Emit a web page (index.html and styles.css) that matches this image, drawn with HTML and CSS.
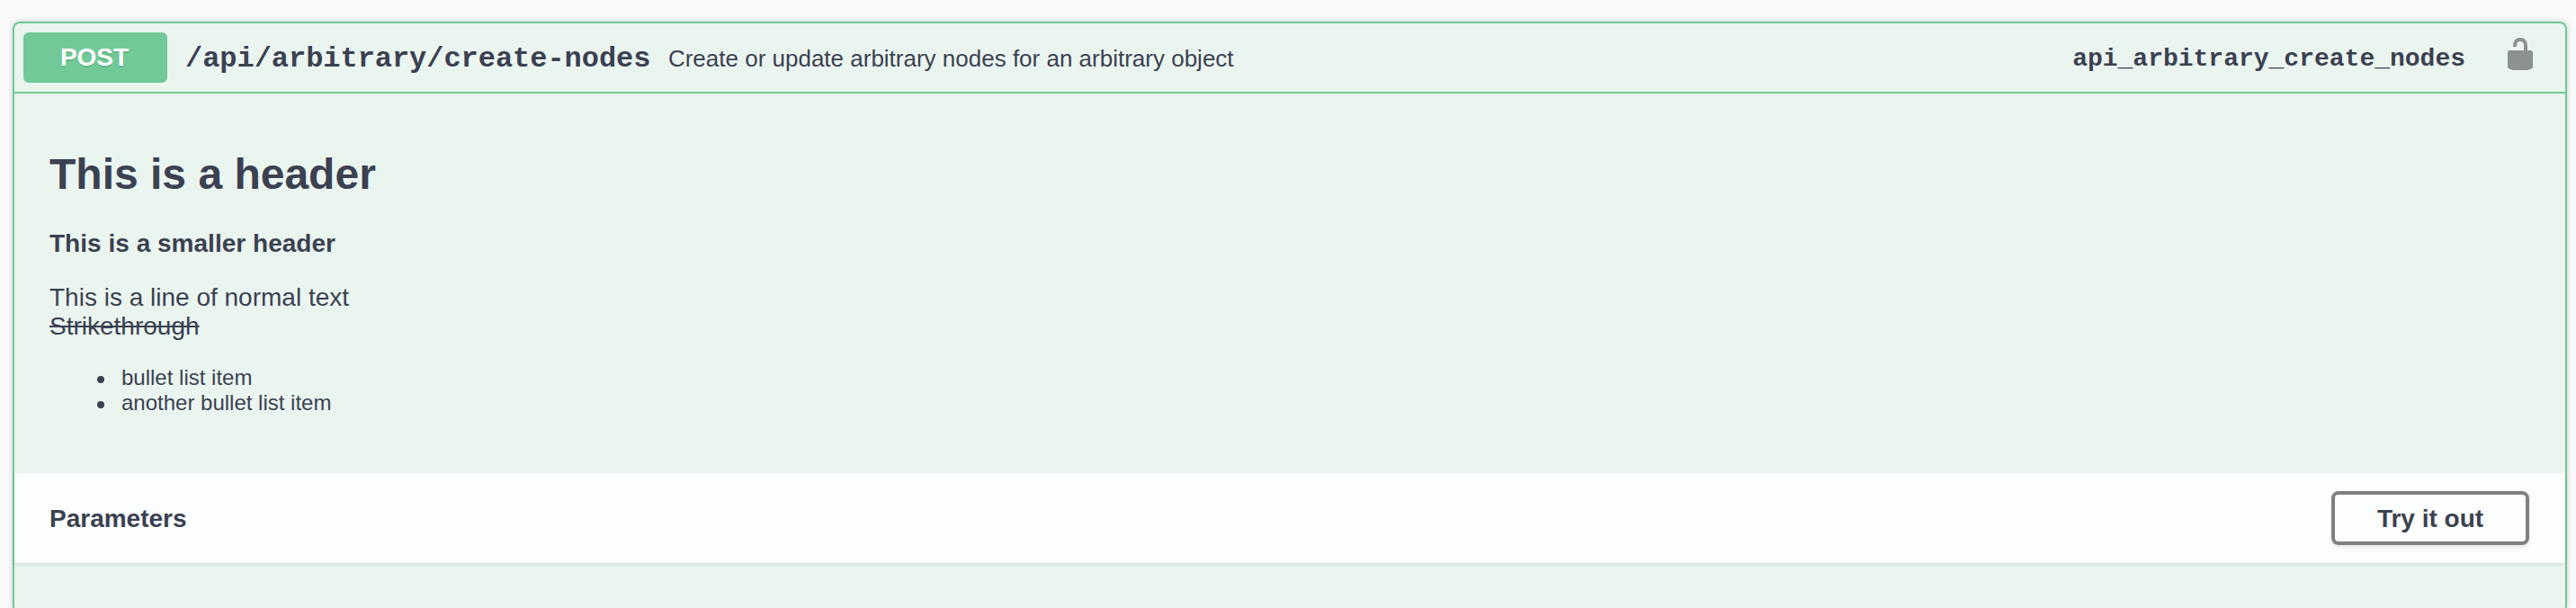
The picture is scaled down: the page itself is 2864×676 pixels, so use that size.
FILE: index.html
```html
<!DOCTYPE html>
<html lang="en">
<head>
<meta charset="utf-8">
<title>API documentation</title>
<link rel="stylesheet" href="styles.css">
</head>
<body>
<main class="opblock">
  <header class="summary">
    <span class="method">POST</span>
    <span class="path">/api/arbitrary/create-nodes</span>
    <span class="description">Create or update arbitrary nodes for an arbitrary object</span>
    <span class="operation-id">api_arbitrary_create_nodes</span>
    <svg class="lock" viewBox="0 0 20 20" aria-hidden="true"><path d="M15.8 8H14V5.6C14 2.703 12.665 1 10 1 7.334 1 6 2.703 6 5.6V6h2v-.801C8 3.754 8.797 3 10 3c1.203 0 2 .754 2 2.199V8H4c-.553 0-1 .646-1 1.199V17c0 .549.428 1.139.951 1.307l1.197.387C5.672 18.861 6.55 19 7.1 19h5.8c.549 0 1.428-.139 1.951-.307l1.196-.387c.524-.167.953-.757.953-1.306V9.199C17 8.646 16.352 8 15.8 8z"/></svg>
  </header>
  <section class="markdown">
    <h1>This is a header</h1>
    <h2>This is a smaller header</h2>
    <p>This is a line of normal text<br><del>Strikethrough</del></p>
    <ul>
      <li>bullet list item</li>
      <li>another bullet list item</li>
    </ul>
  </section>
  <section class="section-header">
    <h3>Parameters</h3>
    <button class="try-out" type="button">Try it out</button>
  </section>
</main>
</body>
</html>
```
FILE: styles.css
```css
* { box-sizing: border-box; }

body {
  margin: 0;
  height: 676px;
  padding: 24px 10px 0 14px;
  background: #fafafa;
  color: #3b4151;
  font-family: "Liberation Sans", Arial, sans-serif;
}

.opblock {
  height: 652px;
  border: 2px solid #70c996;
  border-bottom: 0;
  border-radius: 8px 8px 0 0;
  background: #ebf5f0;
  box-shadow: 0 0 6px rgba(0, 0, 0, .19);
}

.summary {
  display: flex;
  align-items: center;
  height: 78px;
  padding: 0 30px 0 10px;
  border-bottom: 2px solid #70c996;
}

.method {
  width: 160px;
  height: 56px;
  padding-right: 2px;
  border-radius: 6px;
  background: #70c996;
  color: #fff;
  font-size: 28px;
  font-weight: 700;
  line-height: 56px;
  text-align: center;
  text-shadow: 0 2px 0 rgba(0, 0, 0, .1);
}

.path,
.operation-id {
  padding-top: 2px;
  font-family: "Liberation Mono", "Courier New", monospace;
  font-weight: 700;
  white-space: nowrap;
}

.path {
  margin-left: 20px;
  font-size: 32px;
  letter-spacing: -.04px;
}

.description {
  flex: 1;
  margin-left: 19.5px;
  padding-top: 2px;
  font-size: 26px;
}

.operation-id { font-size: 28px; }

.lock {
  width: 40px;
  height: 40px;
  margin: 0 0 8px 41px;
  opacity: .4;
}

.markdown {
  height: 422px;
  padding: 62px 39px 0;
}

.markdown h1 {
  margin: 0 0 33px;
  font-size: 48px;
  line-height: 56px;
}

.markdown h2 {
  margin: 0 0 28px;
  font-size: 28px;
  line-height: 32px;
  letter-spacing: .02px;
}

.markdown p {
  margin: 0 0 27px;
  font-size: 28px;
  line-height: 32px;
}

.markdown ul {
  margin: 0;
  padding-left: 53px;
  font-size: 24px;
  line-height: 28px;
  list-style: none;
}

.markdown li {
  display: flex;
  align-items: center;
}

.markdown li::before {
  content: "";
  width: 8px;
  height: 8px;
  margin: 4px 19px 0 0;
  border-radius: 50%;
  background: #3b4151;
}

.section-header {
  display: flex;
  align-items: center;
  justify-content: space-between;
  height: 100px;
  padding: 0 40px 0 39px;
  background: rgba(255, 255, 255, .85);
  box-shadow: 0 2px 4px rgba(0, 0, 0, .1);
}

.section-header h3 {
  margin: 0;
  padding-top: 1px;
  font-size: 28px;
}

.try-out {
  width: 220px;
  height: 60px;
  padding: 1px 0 0;
  border: 4px solid #808080;
  border-radius: 8px;
  background: transparent;
  box-shadow: 0 2px 4px rgba(0, 0, 0, .1);
  color: #3b4151;
  font: 700 28px "Liberation Sans", Arial, sans-serif;
}
```
